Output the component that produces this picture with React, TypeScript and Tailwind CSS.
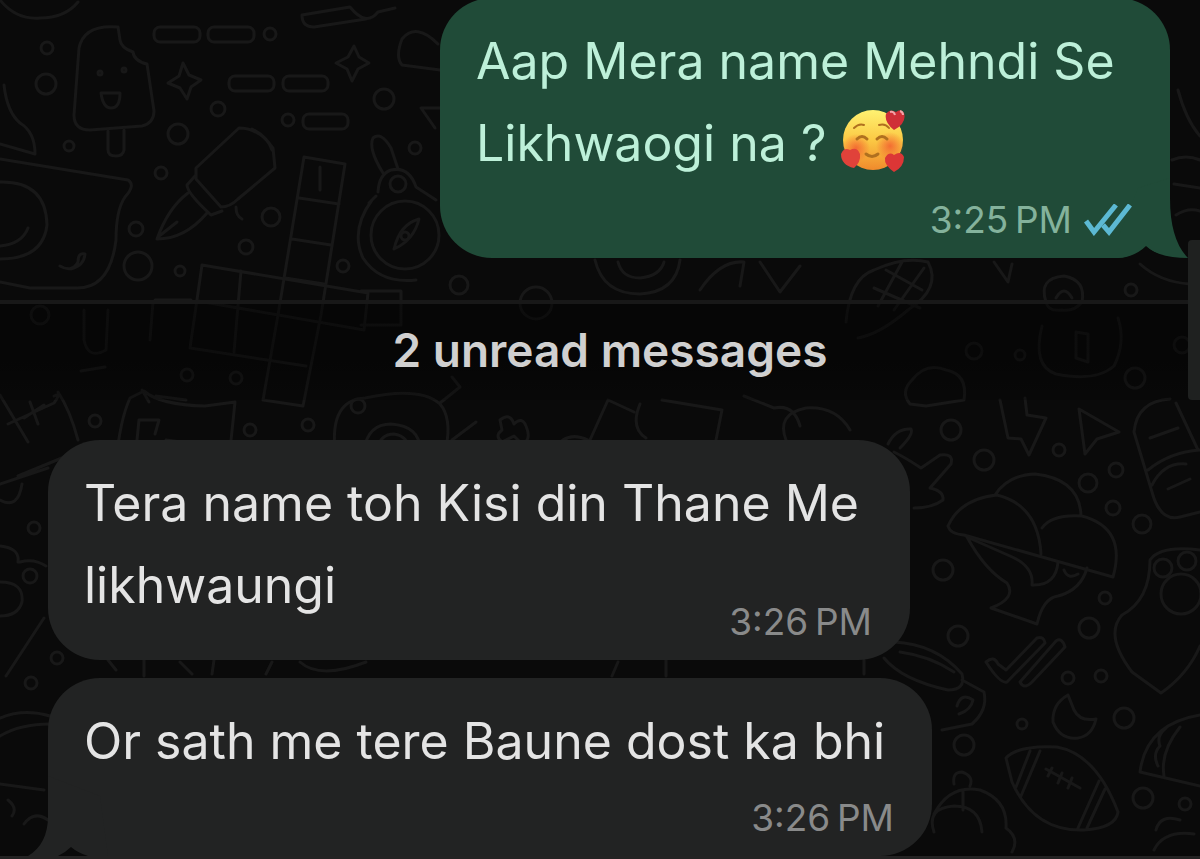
import type { ReactNode } from "react";

type BubbleProps = {
    side: "in" | "out";
    width: string;
    time: string;
    inlineTime?: boolean;
    tail?: boolean;
    children: ReactNode;
};

// [cx, cy, r] of the small rings scattered over the wallpaper
const RINGS = [
    [47, 48, 6], [46, 84, 10], [270, 34, 6], [218, 109, 7], [178, 134, 10], [161, 173, 6],
    [69, 146, 5], [288, 120, 6], [384, 99, 10], [415, 148, 6], [136, 229, 7], [138, 266, 14],
    [180, 271, 5], [246, 247, 7], [271, 217, 9], [343, 266, 6], [40, 315, 9], [95, 421, 6],
    [250, 430, 6], [308, 425, 6], [358, 406, 7], [459, 285, 9], [536, 303, 16], [187, 375, 6],
    [236, 378, 6], [1131, 290, 6], [974, 351, 8], [1020, 355, 5], [1135, 378, 10],
    [951, 430, 10], [984, 460, 10], [1059, 450, 6], [1088, 483, 9], [1116, 470, 7], [1113, 508, 7],
    [1142, 524, 9], [943, 570, 10], [1105, 598, 6], [1089, 628, 10], [958, 636, 10], [1068, 678, 6],
    [1101, 676, 6], [1124, 718, 10], [1022, 724, 5], [964, 745, 10], [1143, 798, 10], [1185, 804, 6],
    [34, 528, 6], [30, 576, 7], [57, 658, 6], [31, 683, 6], [1182, 345, 8],
];

// rounded dashes: [x, y, width]
const DASHES = [
    [154, 27, 46], [208, 27, 46], [229, 76, 45], [283, 76, 45], [303, 114, 45],
];

const Wallpaper = () => (
    <svg
        className="absolute inset-0 w-full h-full pointer-events-none"
        viewBox="0 0 1200 859"
        preserveAspectRatio="xMidYMin slice"
        fill="none"
        stroke="#181818"
        strokeWidth={3}
        strokeLinecap="round"
        strokeLinejoin="round"
        aria-hidden="true"
    >
        {RINGS.map(([cx, cy, r]) => (
            <circle key={`${cx}-${cy}`} cx={cx} cy={cy} r={r} />
        ))}
        {DASHES.map(([x, y, w]) => (
            <rect key={`${x}-${y}`} x={x} y={y} width={w} height={15} rx={6} />
        ))}

        {/* Ice lolly */}
        <path d="M118 27 Q84 24 79 48 L74 115 Q74 130 90 130 L142 126 Q154 123 154 111 L147 64 Q134 61 133 52 Q121 48 120 40 Z" />
        <path d="M108 131 v19 q0 6 8 6 q7 0 8-6 v-20 M101 93 h19 q0 15-9 15 q-8 0-10-15 Z" />
        <circle cx="100" cy="73" r="2" />
        <circle cx="124" cy="70" r="2" />

        {/* Stars */}
        <path d="M183 63 l6 12 l12 5 l-10 7 l-4 12 l-7-11 l-12-5 l11-7 Z" />
        <path d="M354 46 l5 11 l10 6 l-11 6 l-6 12 l-5-12 l-11-6 l12-6 Z" />
        <path d="M302 15 l48-8 q16 20 28 5 l17-4 M302 15 q0 12 12 12 l52-8" />
        <path d="M438 44 q-22-22-36-5 q-7 18 0 26 l38 5 M421 108 h19 M421 108 l14 20" />

        {/* Mug on the left */}
        <path d="M0 0 q16 20 40 18 q25 0 38-16 M4 85 Q7 112 20 123 Q35 132 35 154 L0 144 M0 159 L128 180 Q136 185 125 197 Q116 210 116 240 Q110 289 76 288 L30 288 L0 282" />
        <path d="M0 182 Q46 181 47 225 Q43 259 0 259 M0 246 Q22 244 28 228" />
        <path d="M60 266 q12 7 18-4 q0-10 7-8 q-1 12-14 15" />

        {/* Fountain pen */}
        <path d="M239 128 L196 168 L196 179 L221 207 Q230 207 238 199 L275 168 L273 148 Q259 128 239 128 Z M252 129 Q268 137 272 150" />
        <path d="M195 176 L187 185 Q187 193 211 215 L222 211 M188 193 Q168 208 157 239 Q185 239 207 213 M158 237 L177 222 M236 207 Q236 216 242 219" />

        {/* Crossword */}
        <path d="M304 157 L345 164 L321 315 L303 406 L263 400 L278 315 Z M299 198 L339 204 M292 239 L331 245 M285 278 L324 284 M320 167 v23" />
        <path d="M202 265 L368 293 M202 265 L190 348 L306 366 M241 271 L234 352 M198 301 L364 330 M368 293 L364 330" />
        <path d="M155 300 h36 M153 302 l-3 38 M84 310 v30 q4 20 22 10 l2-40 M81 371 l24-4 M361 291 h40 v34 h-40" />

        {/* Compass */}
        <circle cx="405" cy="235" r="34" />
        <path d="M372 200 Q350 230 363 258 Q380 284 416 280 M378 192 Q379 174 391 170 Q409 166 416 187 L436 200 M376 196 L369 203" />
        <path d="M383 173 Q368 149 373 138 Q381 131 391 148 L398 169 M419 219 Q400 224 394 249 Q414 240 419 219 Z" />
        <circle cx="398" cy="184" r="8" />
        <circle cx="405" cy="236" r="4" />

        {/* Book, cat and arch above the first incoming bubble */}
        <path d="M0 395 L28 442 M8 424 L54 403 Q62 392 54 396 M58 392 Q70 410 78 440 M18 476 L74 453 M24 418 L44 405 M30 402 l8 22 M0 484 L48 468" />
        <path d="M116 462 Q120 420 130 398 L144 391 Q160 405 205 406 L235 402 L230 450 M142 390 l7 12 M136 450 l3-30 h20 l-4 14 M166 440 l30 4 M186 400 l-30 -4" />
        <path d="M335 450 Q330 400 365 398 Q420 386 440 404 Q452 418 446 448 M364 450 Q368 424 391 424 Q420 426 420 450 M377 450 Q380 434 394 434 Q408 436 409 450" />
        <path d="M440 403 l20-16 l-8-10 M452 440 l24-18 M500 420 q10-8 14 4 q8-8 12 2 q6 14-4 18 l-8-8 l-12 6 q-8-6 0-12 Z M554 450 q12-20 34-10" />
        <path d="M590 440 l18-40 l26 12 M640 404 q-10 24 6 34 M662 400 l60 10 l-6 30 M744 396 l30 12 q20-4 26 18 M786 440 q-10-26 20-32 q30-2 44 22" />

        {/* Strip between the outgoing bubble and the divider */}
        <path d="M595 260 q8 34 45 34 q36-2 40-34 M618 262 q4 16 22 16 q20-2 24-16 M700 290 q20-30 44-28 l-4 24 M760 262 l20 30 l20-26" />
        <path d="M846 322 q4-44 28-52 q30-14 54-8 q14 26-20 48 q-28 24-50 28 M874 288 l46 20 M886 270 l36 20 M902 262 l-24 44 M924 268 l-30 42 M994 262 l14 20 l4-18" />
        <path d="M1046 302 q-8-24 18-26 q22 4 18 26 q-8 10-20 8 q-14 2-16-8 Z M1056 298 q8-14 16 0 M1140 264 q20 18 50 20 M1042 326 q-10 40 14 48 q40 8 58-8 q12-24 4-48 M1076 332 v26 l12 4 v-28 Z" />
        <path d="M1178 90 q8 30 22 46 M1172 160 q14-6 28 0 M1174 184 l26 4 M1176 215 q12-8 24-4" />

        {/* Cloud, bolt, pointer */}
        <path d="M910 404 Q900 392 912 380 Q926 362 946 370 Q968 374 964 400 L926 406 Z" />
        <path d="M1000 400 L1008 438 L1021 439 L1029 455 L1046 418 L1027 415 L1025 398 M1079 409 L1119 432 L1097 439 L1085 454 Z" />

        {/* Leaf and cactus */}
        <path d="M888 444 Q896 428 911 429 Q914 434 900 448 M894 452 Q906 458 921 468 L940 455 Q954 453 951 464 L930 488 Q944 491 943 500 Q932 508 914 508" />

        {/* Mushroom */}
        <path d="M995 495 Q1008 475 1035 474 Q1080 479 1081 516 M948 526 Q960 499 997 495 Q1038 505 1041 554 M948 526 Q950 534 964 535 L1113 577 Q1127 528 1082 516 Q1052 514 1042 528" />
        <path d="M967 537 Q985 570 1007 583 Q1017 598 991 608 L1037 624 Q1043 598 1058 596 Q1081 590 1087 568 M967 537 L1010 556 Q1034 566 1032 585 Q1056 586 1058 562 M1064 570 q4 10 14 4" />

        {/* Popsicle packet */}
        <path d="M1170 399 Q1137 401 1134 432 L1152 492 Q1160 522 1180 517 L1200 512 M1176 403 L1198 450 M1148 470 Q1170 452 1200 450 M1152 485 Q1164 462 1186 464 M1150 438 l28-10 M1168 489 l22-10" />

        {/* Paw and shield */}
        <path d="M1200 550 Q1160 545 1150 560 Q1150 600 1122 615 Q1104 635 1132 672 L1161 693 Q1188 674 1200 646" />
        <circle cx="1163" cy="568" r="9" />
        <circle cx="1187" cy="561" r="9" />
        <circle cx="1181" cy="594" r="20" />

        {/* Double check */}
        <path d="M986 662 Q994 655 998 664 L1006 670 L1037 638 Q1044 636 1045 643 L1007 682 Q1000 684 986 662 Z M1020 682 Q1024 690 1032 682 L1065 647 Q1062 637 1056 641 Z" />

        {/* Brush */}
        <path d="M894 642 Q936 644 962 674 Q966 690 948 690 Q902 680 884 658 M900 652 Q930 656 954 672 M962 680 L984 692 Q988 710 972 724 L942 730 M957 706 q4-14 16-6 q-2 10-14 14" />

        {/* Moon */}
        <path d="M1068 695 Q1052 704 1053 722 Q1060 740 1078 738 Q1092 736 1096 719 Q1080 722 1074 710 Z" />

        {/* Football */}
        <path d="M1006 758 Q1018 745 1057 747 Q1096 754 1118 812 Q1116 828 1084 830 Q1034 832 1012 782 Z M1040 751 L1021 796 M1030 751 L1016 787 M1099 781 L1078 828 M1105 789 L1087 828 M1046 769 L1080 788 M1052 768 l-4 8 M1062 773 l-4 10 M1072 778 l-4 10" />
        <path d="M1200 715 Q1146 724 1140 772 L1200 786 M1180 727 Q1160 752 1164 776 M1166 728 q-10 8-6 18 q-8 8-2 20" />

        {/* Flower at the bottom */}
        <path d="M934 814 Q950 784 980 790 Q1008 800 1006 828 Q1020 838 1012 852 M934 832 q-8-24 20-26 q26 0 28 26 M963 790 v20 M954 784 q-2-12 8-12 q12 4 8 14 M1154 850 q10-20 40-16 M1156 830 q4-16 24-10" />

        {/* Left edge, beside the incoming bubbles */}
        <path d="M0 500 Q18 510 22 484 M0 546 q20 2 18 16 M20 562 q14-4 26 4 M0 582 Q24 582 22 602 Q18 616 0 616 M44 618 L6 676 M0 718 Q24 708 50 716 M0 736 Q20 724 50 724 M0 784 L44 790 M24 824 q10-14 24-4 M8 800 q10 8 4 16" />
        <path d="M108 660 l8 10 M144 660 v16 M180 662 l12 12 M214 660 l-2 14 M272 662 l-6 12 M300 662 q20 18 66 0 M618 662 l-6 14 M666 660 v16 M864 660 v14" />
    </svg>
);

const HeartsFace = () => (
    <svg className="inline-block w-16 h-16 align-[-11px]" viewBox="0 0 64 64" role="img" aria-label="Smiling face with hearts">
        <defs>
            <linearGradient id="face" x1="0" y1="0" x2="0" y2="1">
                <stop offset="0" stopColor="#fff271" />
                <stop offset="0.5" stopColor="#fbc944" />
                <stop offset="1" stopColor="#f08a2c" />
            </linearGradient>
            <radialGradient id="blush">
                <stop offset="0" stopColor="#f2592f" stopOpacity="0.8" />
                <stop offset="1" stopColor="#f2592f" stopOpacity="0" />
            </radialGradient>
        </defs>
        <circle cx="32" cy="32" r="30" fill="url(#face)" />
        <circle cx="15" cy="40" r="14" fill="url(#blush)" />
        <circle cx="49" cy="38" r="14" fill="url(#blush)" />
        <g fill="none" stroke="#b0701f" strokeWidth="3" strokeLinecap="round">
            <path d="M13 20 q5-5 10-3 M38 17 q6-2 10 3" strokeWidth="2" />
            <path d="M16 31 q5-5 10 0 M36 31 q5-5 10 0" />
            <path d="M25 46 q6 5 12 0" />
        </g>
        <path d="M53 22 Q43 14 45 6 Q49 0 55 4 Q60 0 63 5 Q66 15 53 22 Z" fill="#cf2f37" />
        <path d="M49 4 q4-1 5 3 M59 3 q3 1 3 4" stroke="#f3a3a8" strokeWidth="2" fill="none" />
        <path d="M13 60 Q0 57 0 46 Q3 39 9 42 Q16 38 19 46 Q20 54 13 60 Z" fill="#e0423a" />
        <path d="M53 64 Q43 57 44 50 Q48 43 53 47 Q60 42 63 49 Q63 59 53 64 Z" fill="#dc3636" />
    </svg>
);

const ReadTicks = () => (
    <svg className="w-12 h-8" viewBox="0 0 48 32" fill="none" stroke="#5cb9d3" strokeWidth={5} role="img" aria-label="Read">
        <path d="M2 17 L10 28 L32 1" />
        <path d="M19 21 L25 28 L46 1" />
    </svg>
);

const Bubble = ({ side, width, time, inlineTime, tail, children }: BubbleProps) => {
    const out = side === "out";
    return (
        <article
            className={`relative max-w-full rounded-[52px] pl-9 pr-[38px] pt-[22px] pb-[18px] ${width} ${
                out ? "self-end bg-[#204b38] text-[#bdf0d9]" : "self-start bg-[#222323] text-[#e4e4e4]"
            }`}
        >
            {tail && out && (
                <svg className="absolute right-0 bottom-0 w-[72px] h-20 -mr-5" viewBox="0 0 72 80" aria-hidden="true">
                    <path d="M0 80 Q18 78 28 69 Q42 80 70 80 Q52 62 52 20 L52 0 L20 10 L0 60 Z" fill="#204b38" />
                    <path d="M0 81 Q18 78 28 68 Q40 79 60 81 Z" fill="#0a0a0a" />
                </svg>
            )}
            {tail && !out && (
                <svg className="absolute left-0 bottom-0 w-20 h-20 -ml-5" viewBox="0 0 80 80" aria-hidden="true">
                    <path d="M20 0 L20 40 Q20 68 0 80 L80 80 L72 20 Z" fill="#222323" />
                    <path d="M30 80 Q38 76 43 71 Q50 77 60 80 Z" fill="#0a0a0a" />
                </svg>
            )}
            <p className="text-[50px] leading-[82px]">{children}</p>
            <div
                className={`relative flex items-center justify-end gap-3 text-[37px] leading-[40px] ${
                    inlineTime ? "-mt-6" : "mt-4"
                } ${out ? "text-[#84b29c]" : "text-[#898a8a]"}`}
            >
                <time>{time}</time>
                {out && <ReadTicks />}
            </div>
        </article>
    );
};

const App = () => {
    return (
        <main className="relative min-h-screen flex flex-col overflow-hidden bg-[#0a0a0a] font-['Inter',sans-serif]">
            <Wallpaper />

            <section className="relative flex flex-col -mt-0.5 pl-12 pr-[30px]">
                <Bubble side="out" width="w-[730px]" time={"3:25\u202fPM"} tail>
                    Aap Mera name Mehndi Se
                    <br />
                    Likhwaogi na ? <HeartsFace />
                </Bubble>
            </section>

            {/* Unread divider */}
            <div className="relative mt-[42px] mb-10 h-[100px] flex items-center justify-center pl-5 pb-1 border-t-4 border-[#181818] bg-linear-to-b from-black/45 via-black/45 to-black/20">
                <h2 className="text-[46px] leading-[52px] font-semibold text-[#d0d0d0]">2 unread messages</h2>
            </div>

            <section className="relative flex flex-col gap-[18px] pl-12 pr-[30px]">
                <Bubble side="in" width="w-[862px]" time={"3:26\u202fPM"} inlineTime>
                    Tera name toh Kisi din Thane Me
                    <br />
                    likhwaungi
                </Bubble>
                <Bubble side="in" width="w-[884px]" time={"3:26\u202fPM"} tail>
                    Or sath me tere Baune dost ka bhi
                </Bubble>
            </section>

            <div className="relative flex-1 bg-[#242323]" />

            {/* Scroll thumb */}
            <div className="absolute right-0 top-60 w-3 h-40 rounded-l-sm bg-[#1f2120]" />
        </main>
    );
};

export default App;
